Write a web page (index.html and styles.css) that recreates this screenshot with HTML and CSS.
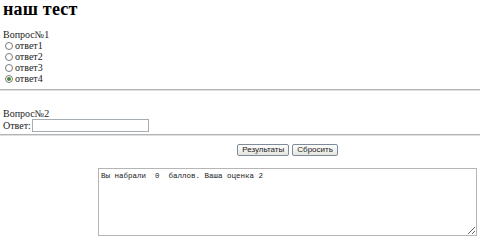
FILE: index.html
```html
<!DOCTYPE html>
<html lang="ru">
<head>
  <meta charset="UTF-8">
  <title>наш тест</title>
  <link rel="stylesheet" href="styles.css">
</head>
<body>

  <h1>наш тест</h1>

  <div class="question">
    <div class="q-title">Вопрос№1</div>
    <label class="option"><input type="radio" name="q1"> ответ1</label>
    <label class="option"><input type="radio" name="q1"> ответ2</label>
    <label class="option"><input type="radio" name="q1"> ответ3</label>
    <label class="option"><input type="radio" name="q1" checked> ответ4</label>
  </div>

  <hr>

  <div class="question second">
    <div class="q-title">Вопрос№2</div>
    <label class="answer">Ответ: <input type="text" class="answer-input"></label>
  </div>

  <hr>

  <div class="result">
    <div class="buttons">
      <button>Результаты</button>
      <button>Сбросить</button>
    </div>
    <textarea class="output">Вы набрали  0  баллов. Ваша оценка 2</textarea>
  </div>

</body>
</html>
```

FILE: styles.css
```css
* {
  box-sizing: border-box;
}

body {
  font-family: 'Liberation Serif', serif;
  font-size: 10px;
  line-height: 11px;
  color: #222;
  background: #fff;
  margin: 0;
}

h1 {
  font-size: 18px;
  line-height: 18px;
  margin: 0 0 0 3px;
  color: #000;
  letter-spacing: 0.2px;
}

.question {
  padding: 11px 3px 0;
}

.q-title {
  height: 11px;
}

.option {
  display: flex;
  align-items: center;
  height: 11px;
  padding-left: 2px;
  gap: 2px;
}

.option input {
  appearance: none;
  margin: 0;
  width: 8px;
  height: 8px;
  border: 1px solid #7a7a7a;
  border-radius: 50%;
  background: #fff;
  display: grid;
  place-content: center;
}

.option input:checked::before {
  content: "";
  width: 4px;
  height: 4px;
  border-radius: 50%;
  background: #4b8a3c;
}

hr {
  margin: 5px 0 0;
  border: none;
  border-top: 1px solid #b4b4b4;
  border-bottom: 1px solid #e0e0e0;
}

.second {
  padding-top: 17px;
}

.answer {
  display: flex;
  align-items: center;
  height: 13px;
  gap: 0;
}

.answer-input {
  width: 117px;
  height: 13px;
  margin: 0 0 0 1px;
  border: 1px solid #a5acb2;
  padding: 0;
}

.second + hr {
  margin-top: 2px;
}

.result {
  margin-left: 98px;
  width: 379px;
  padding-top: 8px;
}

.buttons {
  display: flex;
  justify-content: center;
  gap: 3px;
}

button {
  font-family: 'Liberation Sans', sans-serif;
  font-size: 8px;
  height: 12px;
  padding: 0 4px;
  border: 1px solid #7f8a9c;
  border-radius: 2px;
  background: linear-gradient(#fdfdfd, #e6e6e0);
  color: #222;
  line-height: 10px;
}

.output {
  display: block;
  width: 379px;
  height: 68px;
  margin-top: 12px;
  border: 1px solid #b5b5b5;
  padding: 3px 2px;
  font-family: 'Liberation Mono', monospace;
  font-size: 7.5px;
  line-height: 9px;
  color: #222;
  resize: both;
}
```
